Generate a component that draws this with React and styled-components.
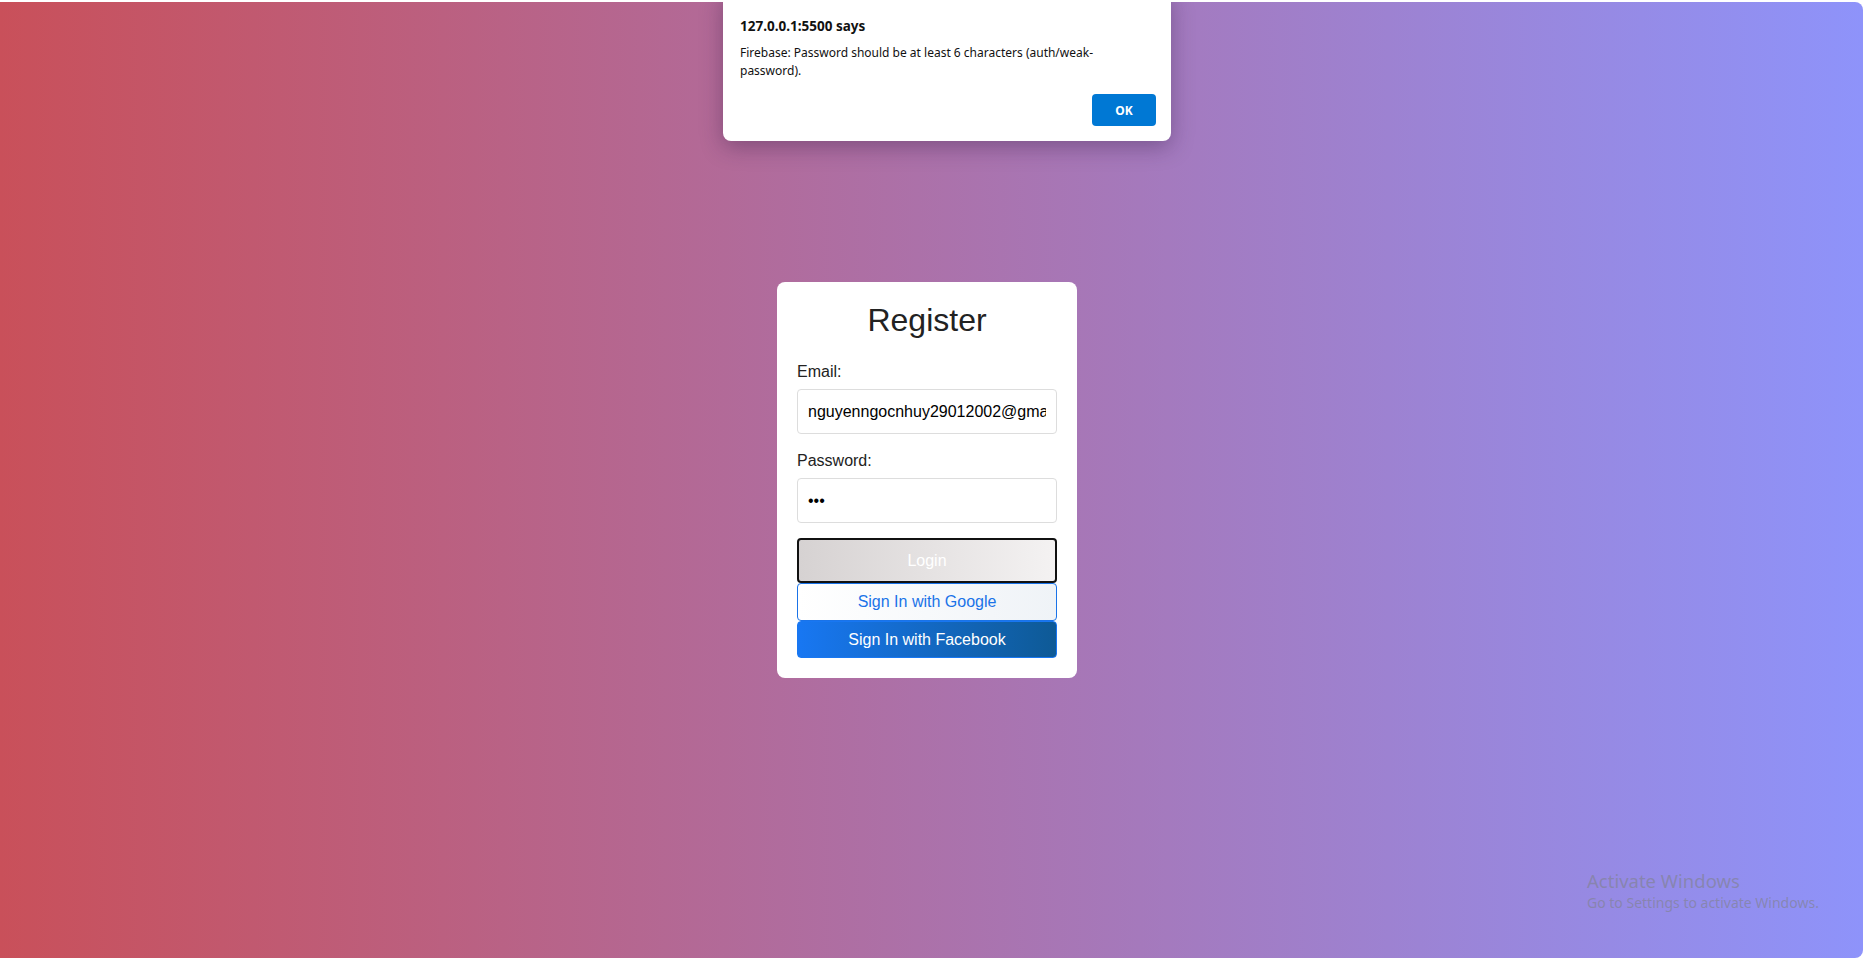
import React from 'react';
import styled, { createGlobalStyle } from 'styled-components';

const GlobalStyle = createGlobalStyle`
  html, body {
    margin: 0;
    padding: 0;
    background: #fff;
    overflow: hidden;
  }
  * {
    box-sizing: border-box;
  }
`;

// Fundo com degradê da página
const Page = styled.div`
  position: relative;
  margin: 2px 3px 2px 0;
  height: 956px;
  border-radius: 0 8px 8px 0;
  background: linear-gradient(to right, #c9505a, #8e93fa);
  display: flex;
  align-items: center;
  justify-content: center;
  padding-right: 9px;
  font-family: 'Liberation Sans', Arial, sans-serif;
  overflow: hidden;
`;

// Cartão do formulário
const Card = styled.div`
  width: 300px;
  background: #fff;
  border-radius: 8px;
  padding: 20px;
`;

const Title = styled.h1`
  margin: 0 0 24px;
  font-size: 32px;
  font-weight: 400;
  text-align: center;
  color: #222;
`;

const Field = styled.div`
  margin-bottom: ${(p) => p.$gap || 18}px;
`;

const Label = styled.label`
  display: block;
  font-size: 16px;
  color: #222;
  margin-bottom: 8px;
`;

const Input = styled.input`
  display: block;
  width: 100%;
  height: 45px;
  padding: 0 10px;
  font-family: 'Liberation Sans', Arial, sans-serif;
  font-size: 16px;
  color: #000;
  border: 1px solid #ddd;
  border-radius: 4px;
  outline: none;
  background: #fff;
`;

const Button = styled.button`
  display: block;
  width: 100%;
  font-family: 'Liberation Sans', Arial, sans-serif;
  font-size: 16px;
  border-radius: 4px;
  cursor: pointer;
  text-align: center;
`;

const LoginButton = styled(Button)`
  height: 45px;
  border: 2px solid #111;
  color: #fff;
  background: linear-gradient(to right, #d6d2d2, #f4f2f2);
`;

const GoogleButton = styled(Button)`
  height: 38px;
  border: 1px solid #1a73e8;
  color: #1a73e8;
  background: linear-gradient(to right, #ffffff, #eff3f7);
`;

const FacebookButton = styled(Button)`
  height: 37px;
  border: 1px solid #1877f2;
  color: #fff;
  background: linear-gradient(to right, #1877f2, #0e5a96);
`;

// Caixa de alerta do navegador
const Dialog = styled.div`
  position: absolute;
  top: -12px;
  left: 723px;
  width: 448px;
  background: #fff;
  border-radius: 8px;
  box-shadow: 0 6px 22px rgba(40, 20, 60, 0.35);
  padding: 27px 17px 15px;
  font-family: 'Noto Sans', 'Open Sans', sans-serif;
  color: #111;
`;

const DialogTitle = styled.div`
  font-size: 13.5px;
  line-height: 18px;
  font-weight: 700;
  margin-bottom: 9px;
`;

const DialogText = styled.div`
  font-size: 12px;
  line-height: 18px;
  width: 380px;
`;

const DialogFooter = styled.div`
  display: flex;
  justify-content: flex-end;
  margin-top: 14px;
`;

const OkButton = styled.button`
  width: 64px;
  height: 32px;
  border: none;
  border-radius: 4px;
  background: #0078d4;
  color: #fff;
  font-family: 'Noto Sans', 'Open Sans', sans-serif;
  font-weight: 700;
  font-size: 12px;
  margin-right: -2px;
`;

// Marca d'água do Windows
const Watermark = styled.div`
  position: absolute;
  left: 1587px;
  top: 867px;
  font-family: 'Noto Sans', 'Open Sans', sans-serif;
  color: rgba(130, 130, 150, 0.7);
`;

const WatermarkTitle = styled.div`
  font-size: 18.5px;
  line-height: 24px;
`;

const WatermarkText = styled.div`
  font-size: 14px;
  line-height: 20px;
`;

const App = () => {
  return (
    <>
      <GlobalStyle />
      <Page>
        <Card>
          <Title>Register</Title>
          <Field>
            <Label>Email:</Label>
            <Input type="email" defaultValue="nguyenngocnhuy29012002@gmail.com" />
          </Field>
          <Field $gap={15}>
            <Label>Password:</Label>
            <Input type="password" defaultValue="123" />
          </Field>
          <LoginButton>Login</LoginButton>
          <GoogleButton>Sign In with Google</GoogleButton>
          <FacebookButton>Sign In with Facebook</FacebookButton>
        </Card>
        <Dialog>
          <DialogTitle>127.0.0.1:5500 says</DialogTitle>
          <DialogText>
            Firebase: Password should be at least 6 characters (auth/weak-password).
          </DialogText>
          <DialogFooter>
            <OkButton>OK</OkButton>
          </DialogFooter>
        </Dialog>
        <Watermark>
          <WatermarkTitle>Activate Windows</WatermarkTitle>
          <WatermarkText>Go to Settings to activate Windows.</WatermarkText>
        </Watermark>
      </Page>
    </>
  );
};

export default App;
